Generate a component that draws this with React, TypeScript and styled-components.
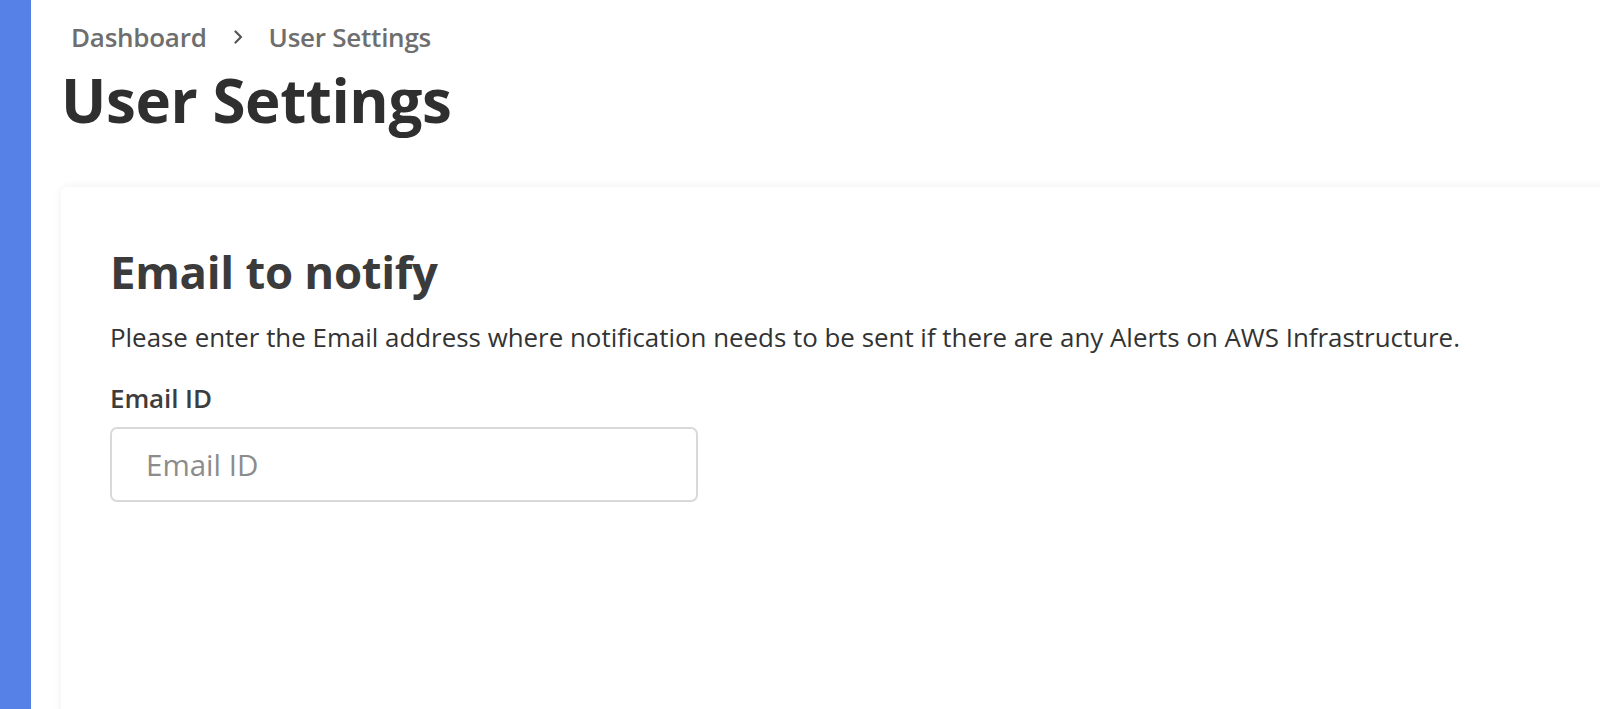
import styled, { createGlobalStyle } from "styled-components"

const GlobalStyle = createGlobalStyle`
    html, body {
        margin: 0;
        padding: 0;
        background: #ffffff;
        font-family: "Open Sans", "Noto Sans", Arial, sans-serif;
    }
    * { box-sizing: border-box; }
`

const Layout = styled.div`
    display: flex;
    height: 709px;
    overflow: hidden;
`
const Sidebar = styled.div`
    width: 31px;
    flex-shrink: 0;
    background-color: #5681e6;
`
const Main = styled.div`
    flex: 1;
    padding-left: 30px;
    overflow: hidden;
`
const Breadcrumb = styled.div`
    display: flex;
    align-items: center;
    gap: 24px;
    padding: 20px 0 0 10px;
    color: #6e6e6e;
    font-size: 26px;
    font-weight: 600;
    line-height: 34px;
    letter-spacing: -0.25px;
`
const Crumb = styled.span``
const Chevron = styled.svg`
    width: 14px;
    height: 14px;
`
const Title = styled.h1`
    margin: 6px 0 0;
    color: #2f2f2f;
    font-size: 60px;
    font-weight: 700;
    line-height: 80px;
    letter-spacing: -0.4px;
`
const Card = styled.div`
    margin-top: 47px;
    width: 1560px;
    height: 560px;
    padding: 54px 49px;
    background: #ffffff;
    border-radius: 6px;
    box-shadow: 0 0 8px rgba(0, 0, 0, 0.07);
`
const CardTitle = styled.h2`
    margin: 0;
    color: #3b3b3b;
    font-size: 45.5px;
    font-weight: 700;
    line-height: 60px;
    letter-spacing: -0.3px;
`
const Description = styled.p`
    margin: 18px 0 0;
    color: #333333;
    font-size: 25.9px;
    line-height: 36px;
`
const Label = styled.label`
    display: block;
    margin-top: 26px;
    color: #3d3d3d;
    font-size: 26px;
    font-weight: 600;
    line-height: 34px;
    letter-spacing: -0.1px;
`
const Input = styled.input`
    display: block;
    margin-top: 12px;
    width: 588px;
    height: 75px;
    padding: 0 34px;
    border: 2px solid #d9d9d9;
    border-radius: 7px;
    font-family: inherit;
    font-size: 29.5px;
    color: #333;
    outline: none;
    &::placeholder {
        color: #8c8c8c;
        font-weight: 400;
    }
`

const App = () => {
    return (
        <Layout>
            <GlobalStyle />
            <Sidebar />
            <Main>
                <Breadcrumb>
                    <Crumb>Dashboard</Crumb>
                    <Chevron viewBox="0 0 14 14" fill="none" stroke="#555" strokeWidth="2.2" strokeLinecap="round" strokeLinejoin="round">
                        <path d="M4.5 1.5 L10 7 L4.5 12.5" />
                    </Chevron>
                    <Crumb>User Settings</Crumb>
                </Breadcrumb>
                <Title>User Settings</Title>
                <Card>
                    <CardTitle>Email to notify</CardTitle>
                    <Description>
                        Please enter the Email address where notification needs to be sent if there are any Alerts on AWS Infrastructure.
                    </Description>
                    <Label htmlFor="email">Email ID</Label>
                    <Input id="email" type="email" placeholder="Email ID" />
                </Card>
            </Main>
        </Layout>
    )
}

export default App
